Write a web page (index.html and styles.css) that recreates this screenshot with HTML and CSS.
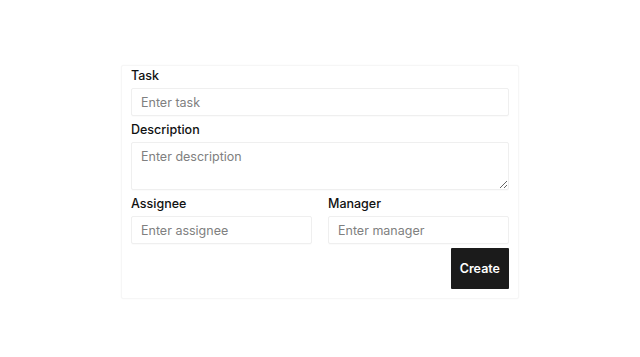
FILE: index.html
```html
<!DOCTYPE html>
<html lang="en">
<head>
  <meta charset="UTF-8">
  <meta name="viewport" content="width=device-width, initial-scale=1.0">
  <title>Create Task</title>
  <link rel="stylesheet" href="styles.css">
</head>
<body>
  <form class="task-card">
    <div class="field">
      <label for="task">Task</label>
      <input type="text" id="task" placeholder="Enter task">
    </div>

    <div class="field">
      <label for="description">Description</label>
      <textarea id="description" placeholder="Enter description"></textarea>
    </div>

    <div class="row">
      <div class="field">
        <label for="assignee">Assignee</label>
        <input type="text" id="assignee" placeholder="Enter assignee">
      </div>
      <div class="field">
        <label for="manager">Manager</label>
        <input type="text" id="manager" placeholder="Enter manager">
      </div>
    </div>

    <div class="actions">
      <button type="button">Create</button>
    </div>
  </form>
</body>
</html>
```

FILE: styles.css
```css
* {
  box-sizing: border-box;
}

body {
  margin: 0;
  padding-top: 7px;
  min-height: 100vh;
  display: flex;
  align-items: center;
  justify-content: center;
  background: #ffffff;
  font-family: "Inter", "Inter Variable", "Open Sans", sans-serif;
  color: #111111;
}

.task-card {
  width: 398px;
  padding: 0 9px 9px;
  background: #ffffff;
  border: 1px solid #f6f6f6;
  border-radius: 2px;
  box-shadow: 0 0 2px rgba(0, 0, 0, 0.03);
}

.field {
  display: flex;
  flex-direction: column;
  margin-bottom: 4px;
}

.field label {
  padding-top: 1px;
  font-size: 12.5px;
  font-weight: 500;
  line-height: 18px;
  margin-bottom: 3px;
}

input[type="text"], textarea {
  width: 100%;
  height: 28px;
  padding: 0 9px;
  border: 1px solid #efefef;
  border-radius: 2px;
  font-family: inherit;
  font-size: 12.5px;
  color: #1f1f1f;
  background: #ffffff;
  box-shadow: 0 1px 1px rgba(0, 0, 0, 0.02);
  outline: none;
}

textarea {
  display: block;
  height: 48px;
  padding: 5px 9px;
  line-height: 18px;
}

input::placeholder, textarea::placeholder {
  color: #808080;
}

.row {
  display: flex;
  gap: 16px;
}

.row .field {
  flex: 1;
}

.actions {
  display: flex;
  justify-content: flex-end;
}

button {
  height: 41px;
  padding: 0 9px;
  background-color: #1b1b1b;
  color: #ffffff;
  border: none;
  border-radius: 1px;
  font-family: inherit;
  font-size: 12.5px;
  font-weight: 600;
  cursor: pointer;
}
```
